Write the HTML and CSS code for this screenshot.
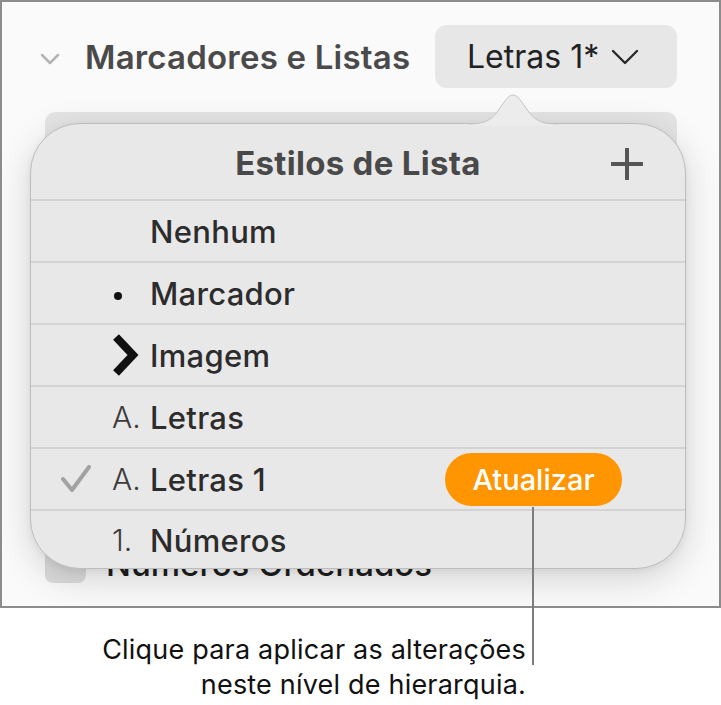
FILE: index.html
```html
<!DOCTYPE html>
<html lang="pt">
  <head>
    <meta charset="UTF-8" />
    <meta name="viewport" content="width=device-width, initial-scale=1.0" />
    <title>Estilos de Lista</title>
    <link rel="stylesheet" href="styles.css">
  </head>

  <body>
    <div id="page">
      <div id="frame">
        <div id="section-head">
          <svg class="disclosure" width="22" height="14" viewBox="0 0 22 14">
            <polyline points="3,3 11,11 19,3" />
          </svg>
          <span id="section-title">Marcadores e Listas</span>
          <button id="style-select">
            Letras 1*
            <svg width="28" height="16" viewBox="0 0 28 16">
              <polyline points="2,2 14,14 26,2" />
            </svg>
          </button>
        </div>

        <div id="under-bar"></div>
        <div id="under-row">
          <span id="under-box"></span>
          <span id="under-label">Números Ordenados</span>
        </div>

        <div id="popover">
          <svg id="notch" width="90" height="32" viewBox="0 0 90 32">
            <path class="notch-fill" d="M0,32 L0,30 C18,30 24,26 32,14 C38,5 41,1 45,1 C49,1 52,5 58,14 C66,26 72,30 90,30 L90,32 Z" />
            <path class="notch-edge" d="M0,30 C18,30 24,26 32,14 C38,5 41,1 45,1 C49,1 52,5 58,14 C66,26 72,30 90,30" />
          </svg>

          <div id="popover-head">
            <span id="popover-title">Estilos de Lista</span>
            <svg id="add-btn" width="32" height="32" viewBox="0 0 32 32">
              <line x1="16" y1="1" x2="16" y2="31" />
              <line x1="1" y1="16" x2="31" y2="16" />
            </svg>
          </div>

          <div class="row">
            <span class="check"></span>
            <span class="marker"></span>
            <span class="label">Nenhum</span>
          </div>
          <div class="row">
            <span class="check"></span>
            <span class="marker"><span class="dot"></span></span>
            <span class="label">Marcador</span>
          </div>
          <div class="row">
            <span class="check"></span>
            <span class="marker">
              <svg width="28" height="42" viewBox="0 0 28 42">
                <polyline class="arrow" points="4,3 21,21 4,39" />
              </svg>
            </span>
            <span class="label">Imagem</span>
          </div>
          <div class="row">
            <span class="check"></span>
            <span class="marker marker-text">A.</span>
            <span class="label">Letras</span>
          </div>
          <div class="row">
            <span class="check">
              <svg width="30" height="28" viewBox="0 0 30 28">
                <polyline points="2,14 11,25 28,2" />
              </svg>
            </span>
            <span class="marker marker-text">A.</span>
            <span class="label">Letras 1</span>
            <button id="update-btn">Atualizar</button>
          </div>
          <div class="row row-last">
            <span class="check"></span>
            <span class="marker marker-text">1.</span>
            <span class="label">Números</span>
          </div>
        </div>
      </div>

      <div id="callout">
        <span id="callout-line"></span>
        <p id="callout-text">
          Clique para aplicar as alterações<br />neste nível de hierarquia.
        </p>
      </div>
    </div>
  </body>
</html>
```

FILE: styles.css
```css
body {
  margin: 0;
  background-color: #ffffff;
  font-family: "Inter", "Roboto", sans-serif;
}

#page {
  position: relative;
  width: 721px;
  height: 705px;
}

#frame {
  position: relative;
  width: 721px;
  height: 608px;
  box-sizing: border-box;
  border: 2px solid #8c8c8c;
  background-color: #fafafa;
  overflow: hidden;
}

#section-head {
  display: flex;
  align-items: center;
  height: 63px;
  margin-top: 23px;
  padding: 0 42px 0 37px;
}

.disclosure {
  fill: none;
  stroke: #b4b4b4;
  stroke-width: 2.5;
  stroke-linecap: round;
  stroke-linejoin: round;
  margin-top: 4px;
}

#section-title {
  margin-left: 24px;
  font-size: 33px;
  font-weight: 600;
  color: #4a4a4a;
  letter-spacing: 0.2px;
}

#style-select {
  display: flex;
  align-items: center;
  gap: 12px;
  margin-left: auto;
  width: 242px;
  height: 63px;
  padding: 0 0 0 32px;
  border: 0;
  border-radius: 12px;
  background-color: #e7e7e7;
  font-family: inherit;
  font-size: 32px;
  color: #222222;
}

#style-select svg {
  fill: none;
  stroke: #2a2a2a;
  stroke-width: 2.4;
  stroke-linecap: round;
  stroke-linejoin: round;
}

#under-bar {
  width: 632px;
  height: 40px;
  margin: 24px 0 0 43px;
  border-radius: 10px;
  background-color: #e4e4e4;
}

#under-row {
  display: flex;
  align-items: center;
  gap: 20px;
  margin: 388px 0 0 43px;
}

#under-box {
  width: 41px;
  height: 42px;
  border-radius: 8px;
  background-color: #dcdcdc;
}

#under-label {
  font-size: 33px;
  font-weight: 500;
  color: #1e1e1e;
  margin-top: 4px;
}

#popover {
  position: absolute;
  left: 28px;
  top: 121px;
  width: 656px;
  height: 446px;
  box-sizing: border-box;
  border: 1px solid #bdbdbd;
  border-radius: 50px;
  background-color: #e8e8e8;
  box-shadow: 0 10px 36px rgba(0, 0, 0, 0.16), 0 2px 6px rgba(0, 0, 0, 0.06);
}

#notch {
  position: absolute;
  left: 437px;
  top: -30px;
}

.notch-fill {
  fill: #ececec;
}

.notch-edge {
  fill: none;
  stroke: #c4c4c4;
  stroke-width: 1;
}

#popover-head {
  position: relative;
  display: flex;
  align-items: center;
  justify-content: center;
  height: 75px;
  box-sizing: border-box;
  padding-top: 2px;
}

#popover-title {
  font-size: 33px;
  font-weight: 700;
  color: #494949;
  letter-spacing: 0.3px;
}

#add-btn {
  position: absolute;
  right: 42px;
  top: 24px;
  stroke: #555555;
  stroke-width: 4;
  stroke-linecap: round;
}

.row {
  display: grid;
  grid-template-columns: 81px 38px auto 1fr;
  align-items: center;
  height: 62px;
  box-sizing: border-box;
  border-top: 2px solid #d3d3d3;
}

.row-last {
  height: 60px;
}

.check {
  display: flex;
  justify-content: center;
  padding-left: 8px;
}

.check svg {
  fill: none;
  stroke: #a2a2a2;
  stroke-width: 4;
  stroke-linecap: round;
  stroke-linejoin: round;
}

.marker {
  display: flex;
  align-items: center;
}

.marker-text {
  font-size: 30px;
  font-weight: 300;
  color: #3c3c3c;
}

.dot {
  width: 8px;
  height: 8px;
  margin: 6px 0 0 2px;
  border-radius: 50%;
  background-color: #111111;
}

.arrow {
  fill: none;
  stroke: #111111;
  stroke-width: 8;
  stroke-linejoin: miter;
}

.label {
  font-size: 31px;
  font-weight: 450;
  color: #2c2c2c;
  letter-spacing: 0.3px;
}

#update-btn {
  justify-self: end;
  width: 177px;
  height: 53px;
  margin-right: 63px;
  border: 0;
  border-radius: 27px;
  background-color: #ff9500;
  font-family: inherit;
  font-size: 29px;
  font-weight: 550;
  color: #ffffff;
}

#callout-line {
  position: absolute;
  left: 532px;
  top: 507px;
  width: 2px;
  height: 158px;
  background-color: #7d7d7d;
}

#callout-text {
  width: 526px;
  margin: 24px 0 0;
  text-align: right;
  font-size: 27px;
  line-height: 35px;
  color: #111111;
  letter-spacing: 0.2px;
}
```
